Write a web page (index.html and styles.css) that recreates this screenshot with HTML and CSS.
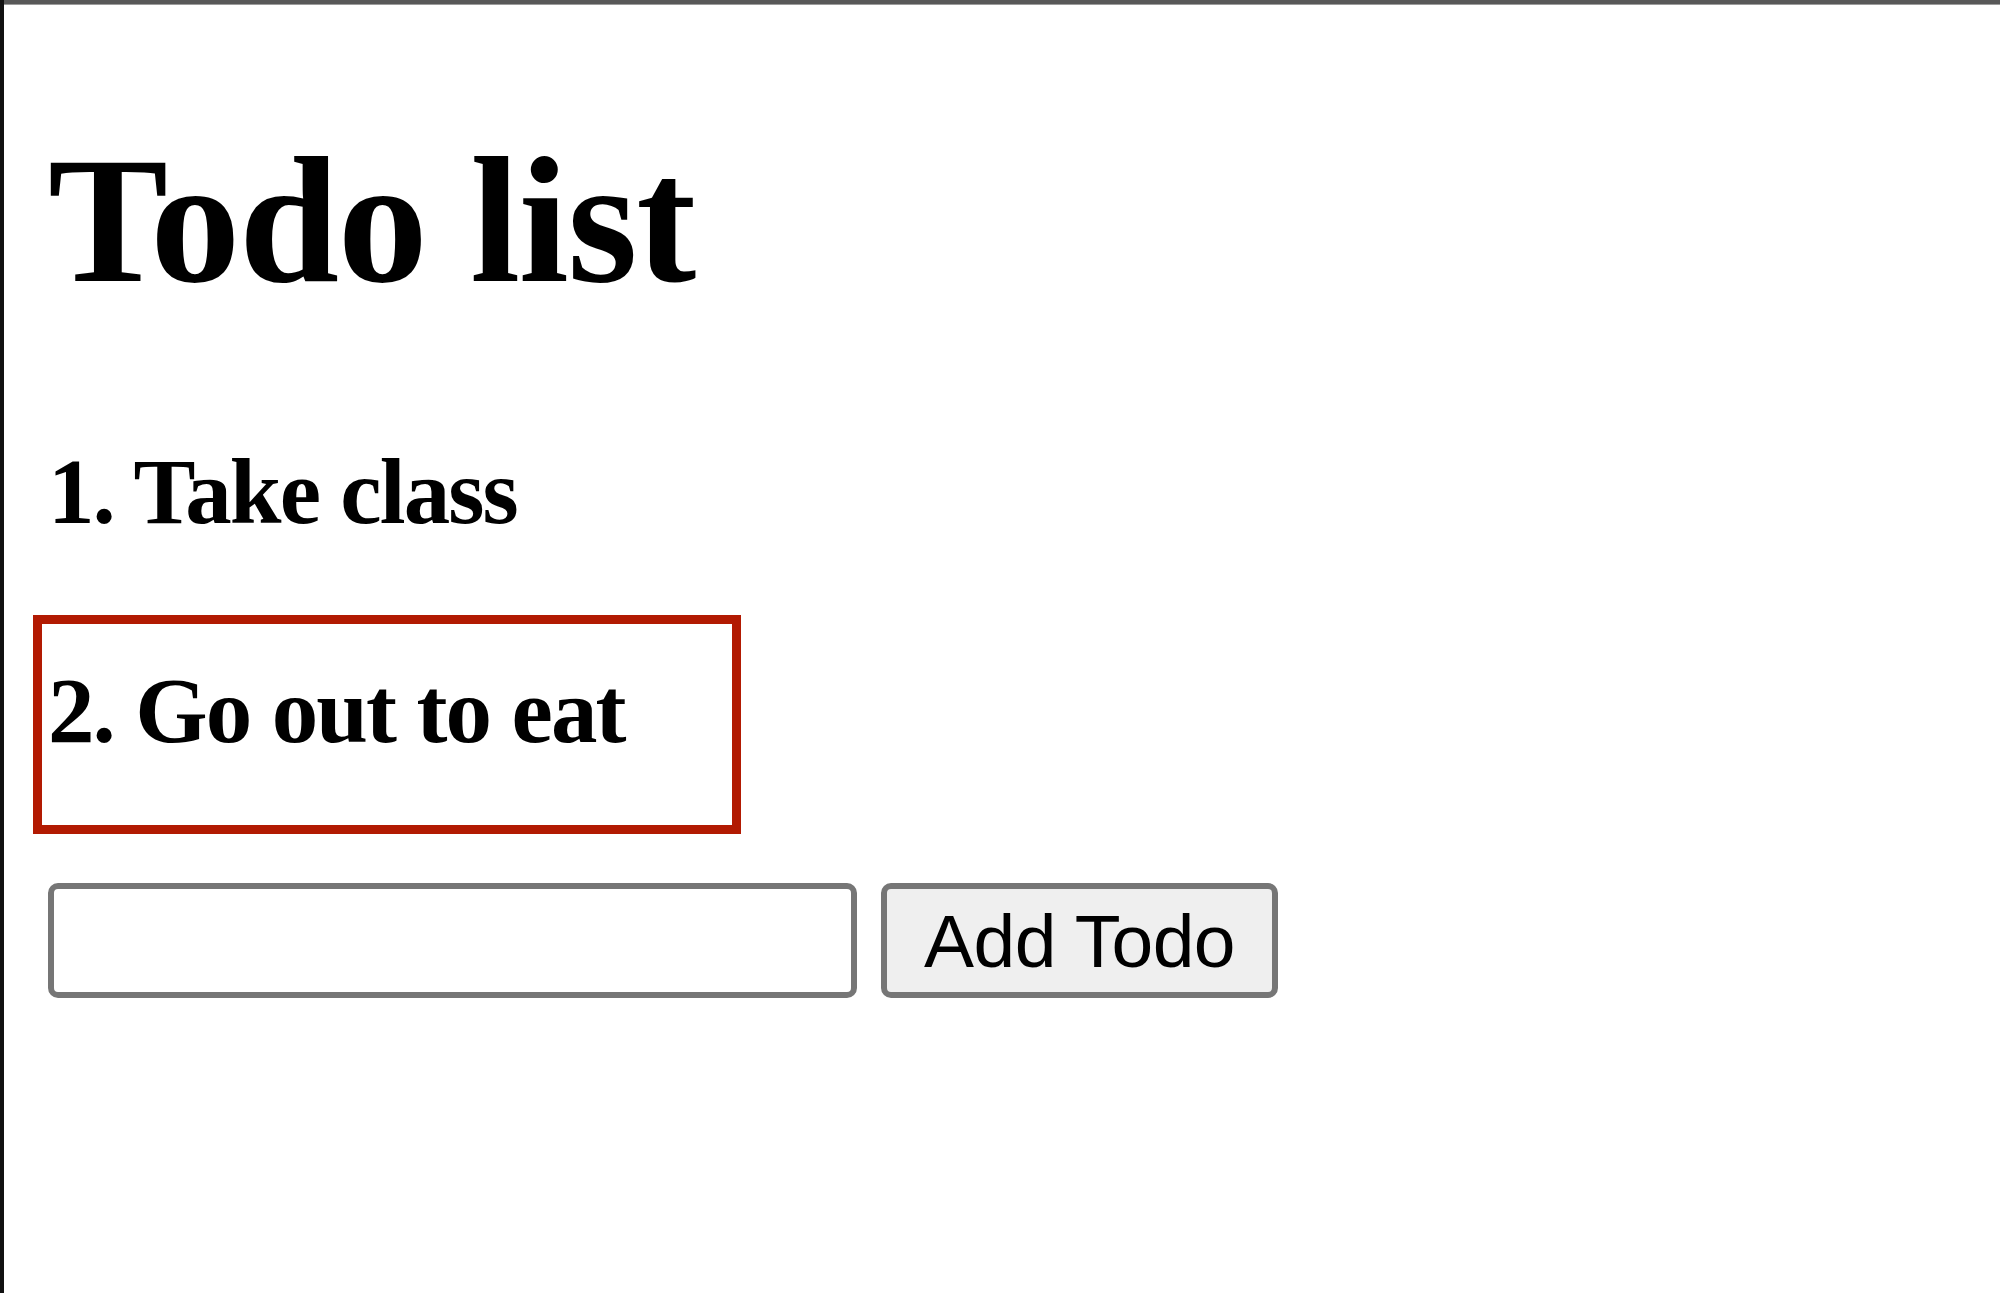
FILE: index.html
```html
<!DOCTYPE html>
<html lang="en">
<head>
<meta charset="utf-8">
<title>Todo list</title>
<link rel="stylesheet" href="styles.css">
</head>
<body>
<div class="frame">
  <div class="topbar"></div>
  <main class="app">
    <h1 class="title">Todo list</h1>
    <ol class="todo-list">
      <li class="todo-item">1. Take class</li>
      <li class="todo-item is-selected">2. Go out to eat</li>
    </ol>
    <form class="add-form">
      <input class="add-input" type="text" aria-label="New todo">
      <button class="add-button" type="button">Add Todo</button>
    </form>
  </main>
</div>
</body>
</html>
```

FILE: styles.css
```css
html, body {
  margin: 0;
  padding: 0;
  background: #ffffff;
}

.frame {
  min-height: 100vh;
  box-sizing: border-box;
  border-left: 4px solid #111111;
  display: flex;
  flex-direction: column;
}

.topbar {
  height: 4px;
  background: #585858;
  border-bottom: 1px solid #9c9c9c;
}

.app {
  padding-left: 29px;
  display: flex;
  flex-direction: column;
  align-items: flex-start;
}

.title {
  margin: 116px 0 75px 15px;
  font-family: "Liberation Serif", "Times New Roman", serif;
  font-weight: bold;
  font-size: 180px;
  line-height: 200px;
  letter-spacing: -1.3px;
  color: #000000;
}

.todo-list {
  list-style: none;
  margin: 0;
  padding: 0;
  display: flex;
  flex-direction: column;
}

.todo-item {
  box-sizing: border-box;
  width: 708px;
  height: 219px;
  border: 9px solid transparent;
  padding: 34px 0 0 6px;
  font-family: "Liberation Serif", "Times New Roman", serif;
  font-weight: bold;
  font-size: 93px;
  line-height: 106px;
  letter-spacing: -1.9px;
  color: #000000;
}

.todo-item.is-selected {
  border-color: #b21a02;
}

.add-form {
  margin: 49px 0 0 15px;
  display: flex;
  gap: 24px;
}

.add-input {
  box-sizing: border-box;
  width: 809px;
  height: 115px;
  margin: 0;
  border: 6px solid #767676;
  border-radius: 10px;
  background: #ffffff;
  padding: 0 10px;
  font-family: "Liberation Sans", Arial, sans-serif;
  font-size: 75px;
}

.add-button {
  box-sizing: border-box;
  width: 397px;
  height: 115px;
  margin: 0;
  padding: 0;
  border: 6px solid #767676;
  border-radius: 10px;
  background: #efefef;
  color: #000000;
  font-family: "Liberation Sans", Arial, sans-serif;
  font-size: 75px;
  letter-spacing: -0.6px;
  text-align: center;
}
```
